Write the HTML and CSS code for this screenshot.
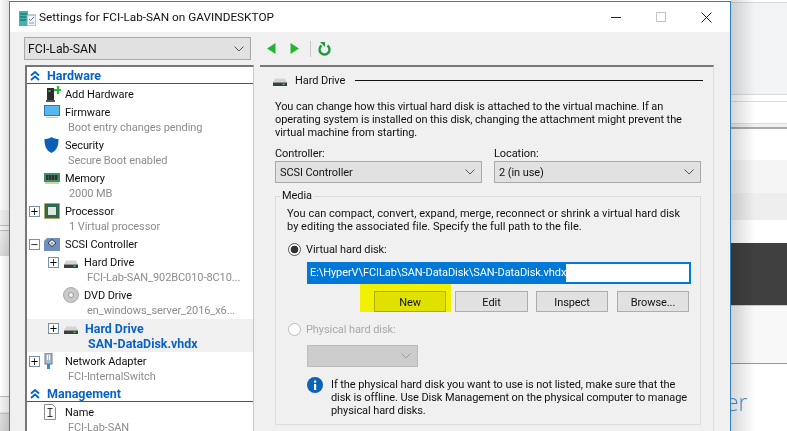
FILE: index.html
```html
<!DOCTYPE html>
<html lang="en">
<head>
<meta charset="utf-8">
<title>Settings for FCI-Lab-SAN</title>
<link rel="stylesheet" href="styles.css">
</head>
<body>
<svg class="defs" width="0" height="0" aria-hidden="true">
  <symbol id="hdd" viewBox="0 0 16 16">
    <path d="M3 6.500h10l2 4H1z" fill="#d4d4d4"/>
    <path d="M1 10.500h14V14H1z" fill="#3e3e3e"/>
    <rect x="10.500" y="11.500" width="2" height="1.500" fill="#35d04a"/>
  </symbol>
  <symbol id="chev" viewBox="0 0 10 6">
    <path d="M.5.5 5 5 9.500.5" fill="none" stroke="currentColor" stroke-width="1"/>
  </symbol>
  <symbol id="dbl" viewBox="0 0 10 10">
    <path d="M1 4.500 5 1l4 3.500M1 9 5 5.500 9 9" fill="none" stroke="#0066cc" stroke-width="1.800"/>
  </symbol>
</svg>

<div class="desktop">
  <div class="bg-left">
    <div class="bl-a"></div><div class="bl-b"></div><div class="bl-c"></div><div class="bl-d"></div><div class="bl-e"></div><div class="bl-f"></div>
  </div>
  <div class="bg-right">
    <div class="br-a"></div><div class="br-b"></div><div class="br-c"></div><div class="br-d"></div><div class="br-e"></div><div class="br-f"></div><div class="br-g"></div><div class="br-h"></div><div class="br-i"></div><div class="br-j"></div>
    <span class="behind-text">er</span>
  </div>
  <div class="shade-left"></div>
  <div class="shade-right"></div>

  <div class="window">
    <header class="titlebar">
      <svg class="app-ico" width="17" height="16" viewBox="0 0 17 16">
        <rect x="0" y="1" width="9" height="15" fill="#3fb6b0"/>
        <path d="M1 4h7M1 7h7M1 10h7" stroke="#0e5f63" stroke-width="1"/>
        <rect x="8" y="5" width="9" height="11" fill="#f4f4f4" stroke="#8a9bb0"/>
        <path d="M10 9l1.500 1.500L15 7" stroke="#4a7ab5" fill="none"/>
        <path d="M10 13h5" stroke="#8a9bb0"/>
      </svg>
      <span class="title">Settings for FCI-Lab-SAN on GAVINDESKTOP</span>
      <span class="controls">
        <svg width="10" height="1" viewBox="0 0 10 1"><rect width="10" height="1" fill="#222"/></svg>
        <svg width="10" height="10" viewBox="0 0 10 10"><rect x=".5" y=".5" width="9" height="9" fill="none" stroke="#c4c4c4"/></svg>
        <svg width="11" height="11" viewBox="0 0 11 11"><path d="M.5.5l10 10M10.500.5l-10 10" stroke="#222" fill="none"/></svg>
      </span>
    </header>

    <div class="toolbar">
      <div class="combo vm-combo"><span>FCI-Lab-SAN</span><svg class="chev"><use href="#chev"/></svg></div>
      <div class="nav">
        <svg width="9" height="11" viewBox="0 0 9 11"><path d="M8.500 0v11L0 5.500z" fill="#22b534"/></svg>
        <svg width="9" height="11" viewBox="0 0 9 11"><path d="M.5 0v11L9 5.500z" fill="#22b534"/></svg>
        <i class="nav-sep"></i>
        <svg width="13" height="14" viewBox="0 0 13 14"><path d="M3.500 3.500a5 5 0 1 0 6 0" fill="none" stroke="#1f9a3c" stroke-width="2.400"/><path d="M2 0h5v5z" fill="#1f9a3c"/></svg>
      </div>
    </div>

    <div class="main">
      <nav class="tree">
        <div class="cat"><svg class="dbl"><use href="#dbl"/></svg><span>Hardware</span></div>

        <div class="row single">
          <span class="slot"></span>
          <span class="ico"><svg width="17" height="18" viewBox="0 0 17 18"><rect x="3" y="3" width="7" height="13" fill="#2d2d2d"/><rect x="4.500" y="5" width="2" height="2" fill="#38c24b"/><rect x="2" y="15" width="9" height="2" fill="#555"/><path d="M10 4h3V1h2v3h2v2h-2v3h-2V6h-3z" fill="#1fc12e"/></svg></span>
          <div class="txt"><div>Add Hardware</div></div>
        </div>

        <div class="row">
          <span class="slot"></span>
          <span class="ico"><svg width="16" height="14" viewBox="0 0 16 14"><rect x=".5" y=".5" width="15" height="10" fill="#58b5ee" stroke="#2a78b8"/><path d="M2 12.500h12" stroke="#c8c8c8"/></svg></span>
          <div class="txt"><div>Firmware</div><div class="sub">Boot entry changes pending</div></div>
        </div>

        <div class="row">
          <span class="slot"></span>
          <span class="ico"><svg width="15" height="16" viewBox="0 0 15 16"><path d="M7.500 0C5.500 1.500 3 2 .5 2c0 6 1 11 7 14 6-3 7-8 7-14-2.500 0-5-.5-7-2z" fill="#0b5fb4"/></svg></span>
          <div class="txt"><div>Security</div><div class="sub">Secure Boot enabled</div></div>
        </div>

        <div class="row">
          <span class="slot"></span>
          <span class="ico"><svg width="16" height="11" viewBox="0 0 16 11"><rect y="0" width="16" height="9" fill="#3b8f69"/><rect x="2" y="2" width="2.500" height="5" fill="#333"/><rect x="5" y="2" width="2.500" height="5" fill="#333"/><rect x="8" y="2" width="2.500" height="5" fill="#333"/><rect x="11" y="2" width="2.500" height="5" fill="#333"/><path d="M1 10h14" stroke="#a8a040"/></svg></span>
          <div class="txt"><div>Memory</div><div class="sub s1">2000 MB</div></div>
        </div>

        <div class="row">
          <span class="slot"><i class="exp">+</i></span>
          <span class="ico"><svg width="16" height="16" viewBox="0 0 16 16"><rect x=".5" y=".5" width="15" height="15" fill="#2f6a50" stroke="#c09a2a" stroke-dasharray="1 1"/><rect x="4" y="4" width="8" height="8" fill="#dfe5e0"/></svg></span>
          <div class="txt"><div>Processor</div><div class="sub s1">1 Virtual processor</div></div>
        </div>

        <div class="row single">
          <span class="slot"><i class="exp">−</i></span>
          <span class="ico"><svg width="16" height="13" viewBox="0 0 16 13"><path d="M3 0h13v13H0V3z" fill="#6e8fbd"/><path d="M8 1.500l4 3.500-4 3.500L4 5z" fill="#e8eef5" stroke="#333"/><path d="M8 4l1.500 1.200L8 6.500 6.500 5.200z" fill="#6e8fbd"/></svg></span>
          <div class="txt"><div>SCSI Controller</div></div>
        </div>

        <div class="row nested">
          <span class="slot"><i class="exp">+</i></span>
          <span class="ico"><svg class="hdd"><use href="#hdd"/></svg></span>
          <div class="txt"><div>Hard Drive</div><div class="sub">FCI-Lab-SAN_902BC010-8C10...</div></div>
        </div>

        <div class="row nested">
          <span class="slot"></span>
          <span class="ico"><svg width="16" height="16" viewBox="0 0 16 16"><circle cx="8" cy="8" r="7.500" fill="#c9c9c9" stroke="#aaa"/><circle cx="8" cy="8" r="2.500" fill="#f2f2f2" stroke="#999"/></svg></span>
          <div class="txt"><div>DVD Drive</div><div class="sub">en_windows_server_2016_x6...</div></div>
        </div>

        <div class="row nested selected">
          <span class="slot"><i class="exp">+</i></span>
          <span class="ico"><svg class="hdd"><use href="#hdd"/></svg></span>
          <div class="txt"><div>Hard Drive</div><div class="sub">SAN-DataDisk.vhdx</div></div>
        </div>

        <div class="row">
          <span class="slot"><i class="exp">+</i></span>
          <span class="ico"><svg width="9" height="16" viewBox="0 0 9 16"><rect x="1" y="0" width="7" height="11" fill="#aebccb" stroke="#6b7c8e"/><path d="M3.500 2v5M5.500 2v5" stroke="#fff"/><rect x="3" y="11" width="3" height="5" fill="#2f8fc9"/></svg></span>
          <div class="txt"><div>Network Adapter</div><div class="sub">FCI-InternalSwitch</div></div>
        </div>

        <div class="cat"><svg class="dbl"><use href="#dbl"/></svg><span>Management</span></div>

        <div class="row">
          <span class="slot"></span>
          <span class="ico"><svg width="12" height="16" viewBox="0 0 12 16"><path d="M.5.500h8l3 3v12H.5z" fill="#fff" stroke="#8c8c8c"/><path d="M3.500 4.500h5M3.500 12.500h5M6 4.500v8" stroke="#333" fill="none"/></svg></span>
          <div class="txt"><div>Name</div><div class="sub">FCI-Lab-SAN</div></div>
        </div>
      </nav>

      <section class="panel">
        <div class="panel-head">
          <svg class="hdd"><use href="#hdd"/></svg>
          <span>Hard Drive</span>
          <i class="rule"></i>
        </div>
        <p class="desc">You can change how this virtual hard disk is attached to the virtual machine. If an<br>operating system is installed on this disk, changing the attachment might prevent the<br>virtual machine from starting.</p>

        <div class="fields">
          <div class="field">
            <label class="lbl">Controller:</label>
            <div class="combo"><span>SCSI Controller</span><svg class="chev"><use href="#chev"/></svg></div>
          </div>
          <div class="field">
            <label class="lbl">Location:</label>
            <div class="combo"><span>2 (in use)</span><svg class="chev"><use href="#chev"/></svg></div>
          </div>
        </div>

        <fieldset class="media">
          <legend>Media</legend>
          <p class="media-desc">You can compact, convert, expand, merge, reconnect or shrink a virtual hard disk<br>by editing the associated file. Specify the full path to the file.</p>
          <div class="radio-row"><i class="radio on"></i><span>Virtual hard disk:</span></div>
          <div class="path"><span class="sel">E:\HyperV\FCILab\SAN-DataDisk\SAN-DataDisk.vhdx</span></div>
          <div class="btns">
            <button class="btn new">New</button>
            <button class="btn edit">Edit</button>
            <button class="btn inspect">Inspect</button>
            <button class="btn browse">Browse...</button>
          </div>
          <div class="radio-row phys"><i class="radio"></i><span>Physical hard disk:</span></div>
          <div class="combo disabled"><svg class="chev"><use href="#chev"/></svg></div>
          <div class="info">
            <svg width="16" height="16" viewBox="0 0 16 16"><circle cx="8" cy="8" r="8" fill="#0b62b8"/><rect x="7" y="7" width="2.200" height="6" fill="#fff"/><rect x="7" y="3.500" width="2.200" height="2.200" fill="#fff"/></svg>
            <p>If the physical hard disk you want to use is not listed, make sure that the<br>disk is offline. Use Disk Management on the physical computer to manage<br>physical hard disks.</p>
          </div>
        </fieldset>
      </section>
    </div>
    <div class="marker"></div>
  </div>
</div>
</body>
</html>
```

FILE: styles.css
```css
* { box-sizing: border-box; }
html, body { margin: 0; padding: 0; }
body { font-family: Roboto, "Open Sans", sans-serif; font-size: 11px; letter-spacing: -.08px; color: #111; background: #fff; }
.defs { position: absolute; }
.desktop { position: relative; width: 787px; height: 431px; overflow: hidden; background: #fff; }

.bg-left { position: absolute; left: 0; top: 0; width: 9px; height: 431px; background: #fff; }
.bl-a { height: 210px; background: #fafafa; }
.bl-b { height: 16px; background: #eeeeee; border-bottom: 1px solid #bbb; }
.bl-c { height: 5px; background: #f4f4f4; border-bottom: 1px solid #bbb; }
.bl-d { height: 25px; background: linear-gradient(#e9e9e9, #d9d9d9); }
.bl-e { height: 141px; background: #fff; border-bottom: 1px solid #bbb; }
.bl-f { height: 34px; background: linear-gradient(#f4f4f4 45%, #aaa 47%, #ddd 50%, #d6d6d6); }

.bg-right { position: absolute; left: 731px; top: 0; width: 56px; height: 431px; background: #fff; }
.br-a { height: 3px; background: #fff; border-bottom: 1px solid #d8d8d8; }
.br-b { height: 92px; background: #f3f4f6; border-bottom: 1px solid #ddd; }
.br-c { height: 7px; background: #fff; border-bottom: 1px solid #ddd; }
.br-d { height: 21px; background: #fff; }
.br-e { height: 6px; background: #f0f0f0; border-top: 1px solid #ddd; border-bottom: 2px solid #aaa; }
.br-f { height: 31px; background: #fff; }
.br-g { height: 33px; background: #f5f5f5; }
.br-h { height: 27px; background: #eeeeee; }
.br-i { height: 23px; background: #fff; }
.br-j { height: 63px; background: #404040; border-bottom: 1px solid #ccc; }
.bg-right::after { content: ""; display: block; height: 57px; background: #f8f8f8; border-bottom: 1px solid #999; }
.behind-text { position: absolute; left: -5px; top: 388px; font-family: "Open Sans", sans-serif; font-weight: 300; font-size: 23px; line-height: 28px; color: #4f95d0; }
.shade-left { position: absolute; left: 0; top: 0; width: 9px; height: 431px; background: linear-gradient(to left, rgba(0,0,0,.1), rgba(0,0,0,0)); }
.shade-right { position: absolute; left: 731px; top: 0; width: 24px; height: 431px; background: linear-gradient(to right, rgba(0,0,0,.16), rgba(0,0,0,0)); }

.window { position: absolute; left: 9px; top: 1px; width: 722px; height: 445px; border: 1px solid #2f7fc4; background: #f0f0f0; overflow: hidden; }

.titlebar { display: flex; align-items: center; height: 30px; background: #fff; padding-left: 9px; }
.app-ico { margin-right: 3px; margin-top: 1px; }
.title { font-size: 11.800px; letter-spacing: 0; color: #111; }
.controls { margin-left: auto; display: flex; align-items: center; gap: 35px; padding-right: 18px; }

.toolbar { display: flex; align-items: center; height: 33px; padding-left: 14px; }
.combo { display: flex; align-items: center; justify-content: space-between; height: 22px; background: #e1e1e1; border: 1px solid #a9a9a9; padding: 0 6px 0 3px; color: #111; }
.vm-combo { width: 227px; height: 23px; font-size: 12.200px; letter-spacing: 0; }
.chev { width: 10px; height: 6px; color: #555; }
.nav { display: flex; align-items: center; margin-left: 16px; }
.nav svg:nth-child(2) { margin-left: 14px; }
.nav-sep { width: 1px; height: 16px; background: #c8c8c8; margin: 0 7px 0 11px; }

.main { display: flex; }
.tree { width: 229px; height: 380px; margin-left: 15px; background: #fff; border-top: 2px solid #777; border-left: 2px solid #777; border-right: 1px solid #c8c8c8; flex: none; }
.cat { display: flex; align-items: center; height: 17px; margin-bottom: 1px; padding: 1px 0 0 3px; border-bottom: 1px solid #0a63bb; color: #0a63c4; font-weight: 700; font-size: 12.500px; letter-spacing: 0; }
.dbl { width: 10px; height: 10px; margin-right: 7px; }
.row { display: flex; height: 33px; padding-left: 2px; }
.row.single { height: 18px; }
.row.nested { padding-left: 21px; }
.slot { width: 15px; flex: none; height: 18px; display: flex; align-items: center; }
.exp { display: block; width: 9px; height: 9px; box-sizing: content-box; border: 1px solid #7890a8; background: #fff; color: #000; font-style: normal; font-size: 10px; line-height: 9px; text-align: center; font-family: "DejaVu Sans", sans-serif; }
.ico { width: 21px; flex: none; height: 18px; display: flex; align-items: center; }
.ico svg { display: block; }
.hdd { width: 16px; height: 16px; }
.txt { white-space: nowrap; }
.txt > div { height: 15px; line-height: 15px; }
.txt > div:first-child { height: 17px; line-height: 20px; }
.sub { color: #8c8c8c; margin-left: 3px; }
.sub.s1 { margin-left: 4px; }
.selected { background: #f0f0f0; }
.selected .txt { color: #0a63c4; font-weight: 700; font-size: 12.400px; letter-spacing: 0; margin-left: 1px; }
.selected .sub { color: #0a63c4; }

.panel { width: 454px; height: 380px; margin-left: 6px; flex: none; border-top: 2px solid #777; border-right: 1px solid #ddd; padding-left: 15px; }
.panel-head { display: flex; align-items: center; height: 14px; margin-top: 6px; margin-left: -3px; white-space: nowrap; }
.panel-head span { margin-left: 7px; }
.rule { display: block; width: 348px; height: 1px; background: #111; margin-left: 10px; }
.desc { margin: 13px 0 0; line-height: 13px; white-space: nowrap; }
.fields { display: grid; grid-template-columns: 207px 207px; column-gap: 12px; margin-top: 7px; }
.lbl { display: block; height: 14px; line-height: 16px; margin-bottom: 1px; }
.field .combo { padding-left: 4px; }
.media { width: 426px; margin: 6px 0 0; padding: 0 0 8px 11px; border: 1px solid #dcdcdc; height: 236px; }
.media legend { padding: 0 2px; margin-left: -7px; line-height: 14px; }
.media-desc { margin: 4px 0 0; line-height: 13px; white-space: nowrap; letter-spacing: .02px; }
.radio-row { display: flex; align-items: center; height: 14px; margin-top: 9px; padding-left: 1px; }
.radio-row span { margin-left: 5px; }
.radio { display: block; width: 13px; height: 13px; border-radius: 50%; border: 1px solid #555; background: #fff; }
.radio.on { background: radial-gradient(circle, #333 0 3.500px, #fff 4.200px); }
.phys { margin-top: 10px; color: #a8a8a8; }
.phys .radio { border-color: #bbb; }
.path { width: 384px; height: 22px; margin: 6px 0 0 20px; border: 2px solid #0078d7; background: #fff; line-height: 18px; white-space: nowrap; }
.sel { display: inline-block; background: #0078d7; color: #fff; padding: 0 0 0 1px; }
.btns { display: flex; margin: 7px 0 0 87px; }
.btn { height: 21px; padding: 1px 0 0; background: #e1e1e1; border: 1px solid #adadad; font: inherit; letter-spacing: inherit; color: #111; }
.new { width: 72px; }
.edit { width: 73px; margin-left: 9px; }
.inspect { width: 72px; margin-left: 8px; }
.browse { width: 72px; margin-left: 9px; }
.disabled { width: 111px; margin: 9px 0 0 20px; background: #cccccc; border-color: #bdbdbd; justify-content: flex-end; height: 22px; }
.disabled .chev { color: #a0a0a0; }
.info { display: flex; margin: 10px 0 0 20px; }
.info svg { flex: none; }
.info p { margin: 1px 0 0 8px; line-height: 13px; white-space: nowrap; }
.marker { position: absolute; left: 350px; top: 282px; width: 91px; height: 28px; background: #ffff00; mix-blend-mode: multiply; }
```
